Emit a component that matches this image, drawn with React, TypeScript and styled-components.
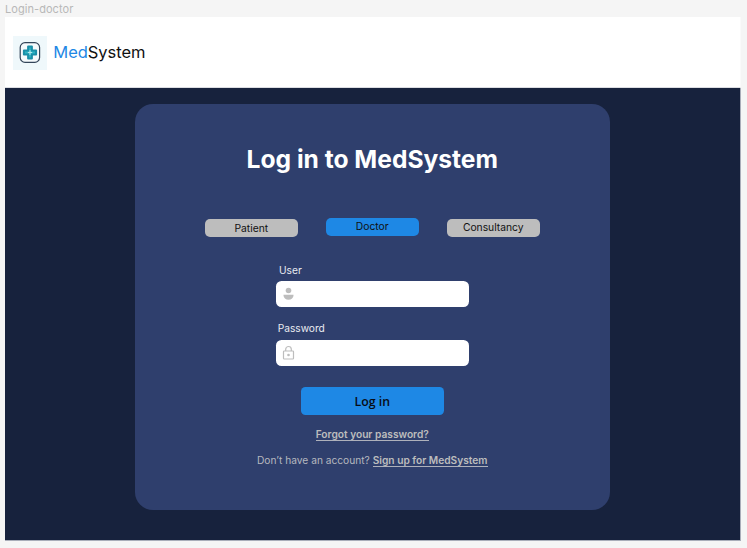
import React from "react";
import styled, { createGlobalStyle } from "styled-components";

const GlobalStyle = createGlobalStyle`
  *, *::before, *::after { box-sizing: border-box; }
  body {
    margin: 0;
    background: #f5f5f5;
    font-family: Inter, "Liberation Sans", sans-serif;
    overflow: hidden;
  }
`;

const Page = styled.div`
  width: 747px;
  height: 548px;
  padding: 0 6px 7px 5px;
  display: flex;
  flex-direction: column;
`;

const FrameLabel = styled.div`
  height: 17px;
  font-size: 11px;
  line-height: 18px;
  letter-spacing: 0.06px;
  color: #b8b8b8;
`;

const Frame = styled.div`
  flex: 1;
  display: flex;
  flex-direction: column;
`;

const Header = styled.header`
  height: 71px;
  flex: none;
  display: flex;
  align-items: center;
  gap: 6.3px;
  padding-left: 8px;
  background: #fff;
  border-bottom: 1px solid #dcdde2;
  border-right: 1px solid #fafafa;
`;

const Stage = styled.div`
  flex: 1;
  padding: 15.6px 0 0 130px;
  background: #17223d;
  border: solid #a9adb9;
  border-width: 0 1px 1px 0;
`;

const Logo = styled.svg`
  width: 34px;
  height: 34px;
  margin-top: 1px;
`;

const Brand = styled.div`
  font-size: 16.5px;
  line-height: 20px;
  letter-spacing: -0.04px;
  color: #111;
  span { color: #1e88e5; }
`;

const Card = styled.main`
  width: 474.5px;
  height: 406px;
  border-radius: 18px;
  background: #2f3f6d;
  display: flex;
  flex-direction: column;
  align-items: center;
`;

const Title = styled.h1`
  margin: 40px 0 0;
  font-size: 24.6px;
  line-height: 31px;
  font-weight: 700;
  color: #fff;
`;

const Roles = styled.div`
  display: flex;
  align-items: flex-start;
  gap: 27.5px;
  margin-top: 43px;
`;

const RoleButton = styled.button<{ $active?: boolean; $drop?: number }>`
  width: 93.5px;
  height: 18.5px;
  margin-top: ${(p) => (p.$active ? 0 : 1)}px;
  padding: ${(p) => p.$drop ?? 0}px 0 0;
  border: 0;
  border-radius: 5px;
  background: ${(p) => (p.$active ? "#1e88e5" : "#bdbdbd")};
  color: #111;
  font: 400 10.3px/17px Inter, sans-serif;
`;

const Form = styled.form`
  width: 193.5px;
  margin-top: 24.5px;
  display: flex;
  flex-direction: column;
`;

const Label = styled.label<{ $indent: number }>`
  padding-left: ${(p) => p.$indent}px;
  height: 19.5px;
  font-size: 10.2px;
  line-height: 17px;
  color: #e9ebf1;
`;

const Field = styled.div`
  height: 26px;
  margin-bottom: 13px;
  padding-left: 6px;
  display: flex;
  align-items: center;
  border-radius: 5.5px;
  background: #fff;
`;

const FieldIcon = styled.svg`
  width: 13px;
  height: 16px;
  flex: none;
`;

const Input = styled.input`
  flex: 1;
  min-width: 0;
  border: 0;
  outline: 0;
  background: transparent;
`;

const Submit = styled.button`
  width: 143.5px;
  height: 28.5px;
  margin: 8px auto 0;
  padding: 1px 0 0;
  border: 0;
  border-radius: 4.5px;
  background: #1e88e5;
  color: #080c14;
  font: 600 12.3px/28px "Open Sans", sans-serif;
`;

const Link = styled.a`
  font-weight: 600;
  border-bottom: 1px solid #aeb1bb;
  display: inline-block;
  line-height: 12px;
  color: #bdbdbd;
`;

const Help = styled.p<{ $top: number }>`
  margin: ${(p) => p.$top}px 0 0;
  height: 14px;
  font-size: 10.2px;
  line-height: 13px;
  white-space: nowrap;
  color: #b6b8bf;
`;

export default function App() {
  return (
    <>
      <GlobalStyle />
      <Page>
        <FrameLabel>Login-doctor</FrameLabel>
        <Frame>
          <Header>
            <Logo viewBox="0 0 34 34">
              <rect width="34" height="34" fill="#eff8fb" />
              <rect x="7.2" y="6.7" width="19.4" height="19.6" rx="4.8" fill="#f5fafc" stroke="#34465a" strokeWidth="1.2" />
              <path
                d="M15.1 10.4h3.8v4.2h4.2v3.8h-4.2v4.2h-3.8v-4.2h-4.2v-3.8h4.2z"
                fill="#2bb4c4"
                stroke="#1a8fa8"
                strokeWidth="2"
                strokeLinejoin="round"
              />
              <path d="M17 14.3v4.4M14.8 16.5h4.4" stroke="#b5e6ec" strokeWidth="1.2" />
            </Logo>
            <Brand>
              <span>Med</span>System
            </Brand>
          </Header>
          <Stage>
            <Card>
              <Title>Log in to MedSystem</Title>
              <Roles>
                <RoleButton $drop={1}>Patient</RoleButton>
                <RoleButton $active>Doctor</RoleButton>
                <RoleButton>Consultancy</RoleButton>
              </Roles>
              <Form>
                <Label htmlFor="user" $indent={3.5}>User</Label>
                <Field>
                  <FieldIcon viewBox="0 0 13 16" fill="#bdbdbd">
                    <circle cx="6.5" cy="4.5" r="2.8" />
                    <path d="M1.5 8.7h10v.8a5 4.2 0 0 1-10 0z" />
                  </FieldIcon>
                  <Input id="user" />
                </Field>
                <Label htmlFor="password" $indent={2.2}>Password</Label>
                <Field>
                  <FieldIcon viewBox="0 0 13 16" fill="none" stroke="#bdbdbd" strokeWidth="1.2">
                    <rect x="1.5" y="6" width="10" height="8" rx="0.8" />
                    <path d="M3.7 6V4.3a2.8 2.8 0 0 1 5.6 0V6" />
                    <circle cx="6.5" cy="10" r="1.3" fill="#bdbdbd" stroke="none" />
                  </FieldIcon>
                  <Input id="password" type="password" />
                </Field>
                <Submit type="button">Log in</Submit>
              </Form>
              <Help $top={13}>
                <Link>Forgot your password?</Link>
              </Help>
              <Help $top={12}>
                Don’t have an account? <Link>Sign up for MedSystem</Link>
              </Help>
            </Card>
          </Stage>
        </Frame>
      </Page>
    </>
  );
}
